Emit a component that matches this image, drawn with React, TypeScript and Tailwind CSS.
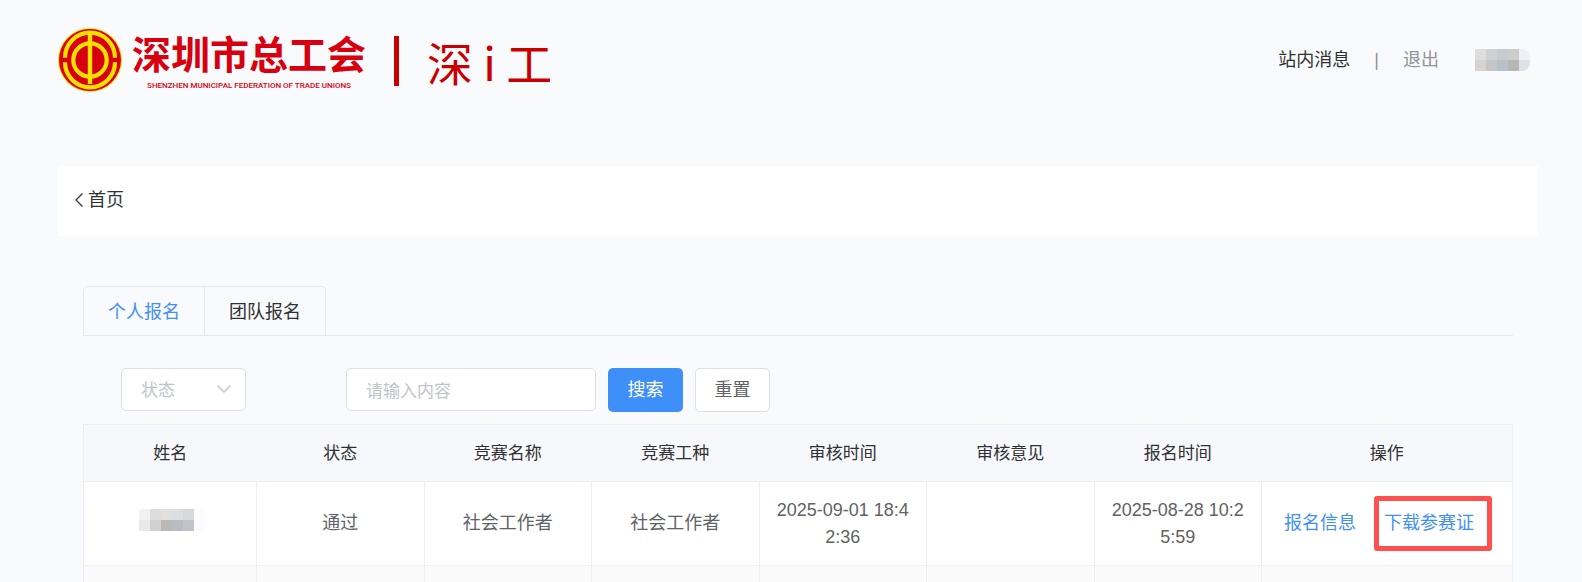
import { useState } from "react";
import clsx from "clsx";

type Tab = "personal" | "team";

interface Entry {
  id: number;
  status: string;
  contest: string;
  trade: string;
  reviewedAt: string;
  opinion: string;
  createdAt: string;
}

const tabs: { key: Tab; label: string }[] = [
  { key: "personal", label: "个人报名" },
  { key: "team", label: "团队报名" },
];

const columns = ["姓名", "状态", "竞赛名称", "竞赛工种", "审核时间", "审核意见", "报名时间", "操作"];

const entries: Entry[] = [
  {
    id: 1,
    status: "通过",
    contest: "社会工作者",
    trade: "社会工作者",
    reviewedAt: "2025-09-01 18:42:36",
    opinion: "",
    createdAt: "2025-08-28 10:25:59",
  },
];

const userMask = [
  ["#dedcdd", "#cdd1d2", "#c5cbd0", "#cccdce", "#eff0f3"],
  ["#d5d4d3", "#c3c6c4", "#b8c0ca", "#b7b6b3", "#dfe1e8"],
];

const nameMask = [
  ["#f2f1ef", "#dddddd", "#e1dfe0", "#dcdee0", "#d8d8d8", "#fcfcfd"],
  ["#e9e9e9", "#d1d1d1", "#bab9b6", "#b9bdc3", "#c1c3c9", "#fafbfe"],
];

// Pixelated block that hides a personal name
function Mask({ rows, className }: { rows: string[][]; className?: string }) {
  return (
    <svg
      width={rows[0].length * 11}
      height={rows.length * 11}
      shapeRendering="crispEdges"
      aria-hidden="true"
      className={className}
    >
      {rows.map((row, y) =>
        row.map((fill, x) => (
          <rect key={`${x}-${y}`} x={x * 11} y={y * 11} width={11} height={11} fill={fill} />
        ))
      )}
    </svg>
  );
}

function Emblem() {
  return (
    <svg viewBox="0 0 64 64" className="size-16 shrink-0" aria-hidden="true">
      <circle cx="32" cy="32" r="32" fill="#ffe100" />
      <circle cx="32" cy="32" r="31" fill="#d7000f" />
      <g fill="none" stroke="#ffe100" strokeWidth="4.2">
        <path d="M7 29.700a25 25 0 0 1 50 0" />
        <path d="M7 34.300a25 25 0 0 0 50 0" />
        <circle cx="32" cy="32" r="16.700" />
      </g>
      <path d="M32 6v50" stroke="#ffe100" strokeWidth="4.4" />
    </svg>
  );
}

export default function App() {
  const [activeTab, setActiveTab] = useState<Tab>("personal");
  const [status, setStatus] = useState("");
  const [keyword, setKeyword] = useState("");

  const handleReset = () => {
    setStatus("");
    setKeyword("");
  };

  return (
    <div className="h-screen overflow-hidden bg-[#f9fafc] pl-[58px] pr-11 font-['Liberation_Sans','Noto_Sans_CJK_SC',sans-serif] text-lg text-[#303133]">
      {/* Header */}
      <header className="flex items-center justify-between pt-7">
        <div className="flex items-center text-[#d7000f]">
          <Emblem />
          <div className="ml-[10px] flex flex-col items-center pt-1">
            <h1 className="text-[39px] font-bold leading-[48px]">深圳市总工会</h1>
            <p className="font-['Roboto',sans-serif] text-[8px] font-medium leading-3">
              SHENZHEN MUNICIPAL FEDERATION OF TRADE UNIONS
            </p>
          </div>
          <span className="ml-7 mt-[2px] h-[50px] w-[5px] bg-[#c80000]" />
          <span className="ml-7 mt-[2px] font-['Noto_Sans_CJK_SC',sans-serif] text-[46px] leading-[60px] text-[#c80000]">
            深 i 工
          </span>
        </div>

        <nav className="flex items-center pr-2">
          <a href="#messages">站内消息</a>
          <span className="ml-6 text-[#909399]">|</span>
          <button type="button" className="ml-6 text-[#909399]">
            退出
          </button>
          <Mask rows={userMask} className="ml-9 rounded-r-lg" />
        </nav>
      </header>

      {/* Breadcrumb */}
      <div className="mt-[74px] flex h-[70px] items-center bg-white px-4 pb-[2px]">
        <a href="#home" className="flex items-center gap-1">
          <svg width="10" height="16" viewBox="0 0 10 16" fill="none" stroke="currentColor" aria-hidden="true">
            <path d="M8.500 1.500 2 8l6.500 6.500" strokeWidth="1.2" />
          </svg>
          首页
        </a>
      </div>

      <main className="px-[25px] pt-[50px]">
        {/* Tabs */}
        <div className="border-b border-[#e4e7ed]">
          <div role="tablist" className="inline-flex rounded-t-[5px] border border-b-0 border-[#e4e7ed] align-top">
            {tabs.map((tab, index) => (
              <button
                key={tab.key}
                type="button"
                role="tab"
                aria-selected={activeTab === tab.key}
                onClick={() => setActiveTab(tab.key)}
                className={clsx(
                  "h-12 px-6 pt-[2px]",
                  index > 0 && "border-l border-[#e4e7ed]",
                  activeTab === tab.key && "text-[#3f8ff9]"
                )}
              >
                {tab.label}
              </button>
            ))}
          </div>
        </div>

        {/* Filters */}
        <form className="mt-8 flex items-start pl-[38px]" onSubmit={(e) => e.preventDefault()}>
          <div className="relative w-[125px]">
            <select
              aria-label="状态"
              value={status}
              onChange={(e) => setStatus(e.target.value)}
              className="h-[43px] w-full appearance-none rounded-[5px] border border-[#dcdfe6] bg-white pl-[19px] pt-1 text-[17px] text-[#c0c4cc] outline-none"
            >
              <option value="">状态</option>
              <option value="pass">通过</option>
            </select>
            <svg
              width="14"
              height="8"
              viewBox="0 0 14 8"
              fill="none"
              stroke="#c0c4cc"
              strokeWidth="1.4"
              aria-hidden="true"
              className="pointer-events-none absolute right-[15px] top-[17px]"
            >
              <path d="M.7.8 7 7 13.300.8" />
            </svg>
          </div>
          <input
            type="text"
            aria-label="请输入内容"
            placeholder="请输入内容"
            value={keyword}
            onChange={(e) => setKeyword(e.target.value)}
            className="ml-[100px] h-[43px] w-[250px] rounded-[5px] border border-[#dcdfe6] bg-white px-[19px] pt-1 text-[17px] outline-none placeholder:text-[#c0c4cc]"
          />
          <button type="submit" className="ml-3 h-11 w-[75px] rounded-[5px] bg-[#3f8ff9] text-white">
            搜索
          </button>
          <button
            type="button"
            onClick={handleReset}
            className="ml-3 h-11 w-[75px] rounded-[5px] border border-[#dcdfe6] bg-white text-[#606266]"
          >
            重置
          </button>
        </form>

        {/* Entries */}
        <table className="mt-3 w-full table-fixed border-collapse border border-[#ebeef5] text-center">
          <colgroup>
            <col className="w-[173px]" />
            <col span={6} />
            <col className="w-[251px]" />
          </colgroup>
          <thead>
            <tr className="h-[57px] bg-[#f7f8fc] text-[17px]">
              {columns.map((column) => (
                <th key={column} scope="col" className="pt-[2px] font-normal">
                  {column}
                </th>
              ))}
            </tr>
          </thead>
          <tbody className="text-[#606266]">
            {entries.map((entry) => (
              <tr key={entry.id} className="h-[84px] bg-white leading-[27px] *:border *:border-[#ebeef5]">
                <td className="pb-2 pl-1">
                  <Mask rows={nameMask} className="mx-auto rounded-tl" />
                </td>
                <td>{entry.status}</td>
                <td>{entry.contest}</td>
                <td>{entry.trade}</td>
                <td className="break-all px-[14px]">{entry.reviewedAt}</td>
                <td>{entry.opinion}</td>
                <td className="break-all px-[14px]">{entry.createdAt}</td>
                <td className="pl-[22px] text-left text-[#3f8ff9]">
                  <div className="flex gap-7">
                    <a href="#detail">报名信息</a>
                    <a href="#certificate" className="relative">
                      下载参赛证
                      <span className="absolute -inset-y-[14px] -left-[10px] -right-[18px] rounded-[3px] border-5 border-[#ff5050]" />
                    </a>
                  </div>
                </td>
              </tr>
            ))}
            <tr className="h-[84px] bg-[#fafafa] *:border *:border-[#ebeef5]">
              {columns.map((column) => (
                <td key={column} />
              ))}
            </tr>
          </tbody>
        </table>
      </main>
    </div>
  );
}
